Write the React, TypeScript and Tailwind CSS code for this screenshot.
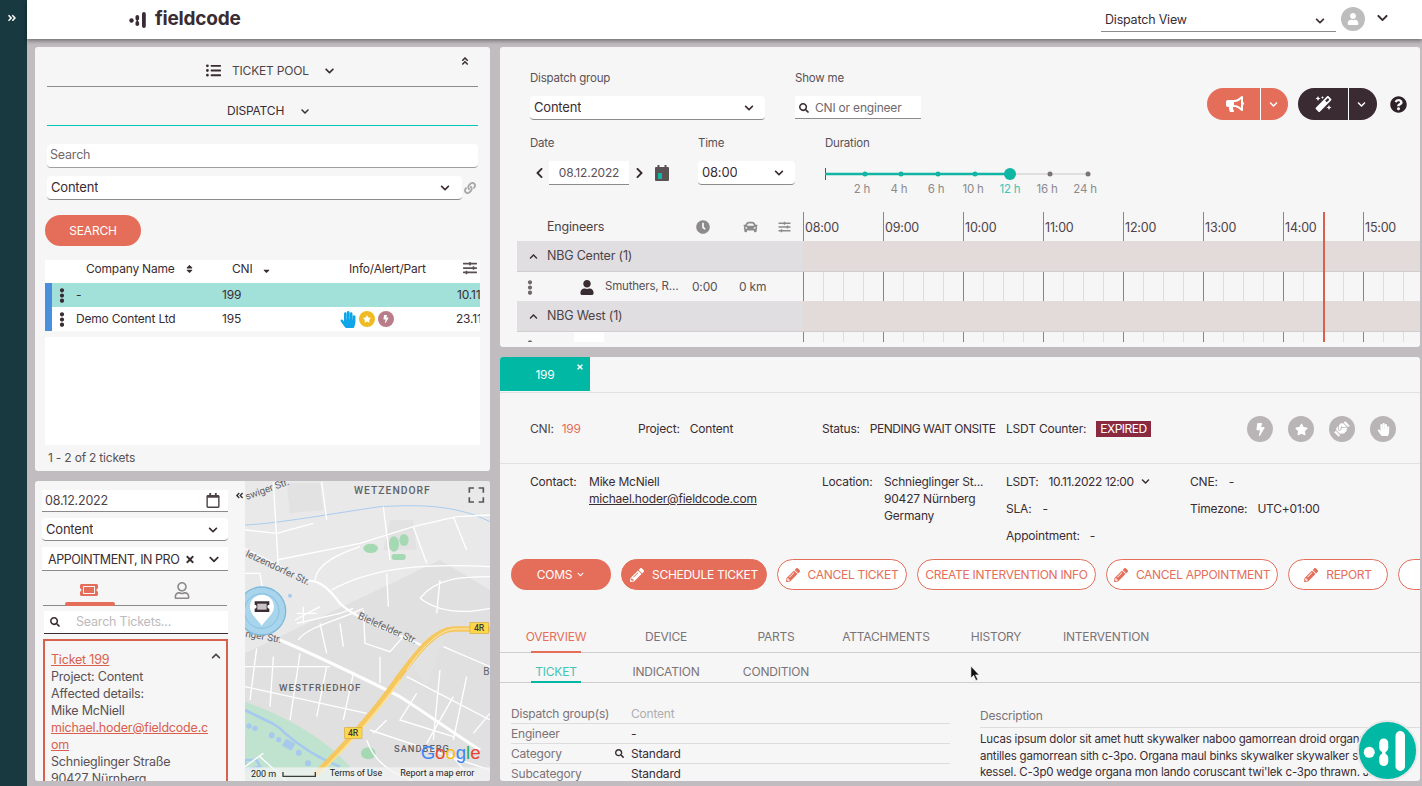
import React from "react";
import {
  FaAngleDoubleRight, FaAngleDoubleLeft, FaAngleDoubleUp, FaChevronDown, FaChevronUp, FaChevronLeft, FaChevronRight,
  FaSearch, FaLink, FaBolt, FaStar, FaHandPaper, FaHandshake, FaBullhorn, FaMagic, FaQuestionCircle, FaClock, FaCar,
  FaUser, FaPencilAlt, FaTimes, FaRegCalendar, FaSlidersH, FaEllipsisV, FaSort, FaSortDown, FaListUl, FaTicketAlt, FaRegUser,
} from "react-icons/fa";

const hours = ["08:00", "09:00", "10:00", "11:00", "12:00", "13:00", "14:00", "15:00"];
const quarters = Array.from({ length: 32 }, (_, i) => i);

const Logo = ({ className }: { className: string }) => (
  <svg viewBox="0 0 20 20" className={className} fill="currentColor">
    <circle cx="2.5" cy="10.5" r="2.2" />
    <rect x="6.5" y="5" width="3.6" height="5.5" rx="1.8" />
    <rect x="6.5" y="11" width="3.6" height="5" rx="1.8" />
    <rect x="7.6" y="9" width="1.4" height="3.5" />
    <rect x="13" y="2" width="3.8" height="16" rx="1.9" />
  </svg>
);

const Select = ({ label, className }: { label: string; className: string }) => (
  <div className={"flex items-center justify-between bg-white border-b border-[#8d8a8c] rounded-sm text-[13px] text-[#3a2c33] " + className}>
    <span className="truncate">{label}</span>
    <FaChevronDown className="w-[12px] h-[10px] shrink-0" />
  </div>
);

const Dots = ({ className }: { className?: string }) => <FaEllipsisV className={"w-[12px] h-[15px] shrink-0 text-[#3a2c33] " + (className ?? "")} />;

function TicketPool() {
  return (
    <div className="bg-[#f6f6f6] rounded-[3px] h-[424px] relative flex flex-col text-[#3a2c33] text-[12px]">
      <FaAngleDoubleUp className="absolute right-[20px] top-[9px] w-[10px] h-[10px]" />
      <div className="mx-[12px] h-[40px] shrink-0 border-b border-[#8d8a8c] flex items-center pl-[158px] pt-[8px]">
        <FaListUl className="w-[17px] h-[15px] mr-[10px]" />
        <span className="text-[#4d4347]">TICKET POOL</span>
        <FaChevronDown className="w-[13px] h-[10px] ml-[14px]" />
      </div>
      <div className="mx-[12px] h-[39px] shrink-0 border-b border-b-[#00c8b4] flex items-center pl-[180px] pt-[10px]">
        <span>DISPATCH</span>
        <FaChevronDown className="w-[12px] h-[9px] ml-[15px]" />
      </div>
      <div className="mx-[12px] mt-[18px] h-[24px] shrink-0 bg-white border-b border-[#a19ea0] rounded-sm px-[3px] flex items-center text-[#6f696c] text-[12.5px]">Search</div>
      <div className="mx-[12px] mt-[8px] flex items-center gap-[2px] shrink-0">
        <Select label="Content" className="w-[415px] h-[24px] px-[4px] pr-[11px]" />
        <FaLink className="w-[12px] h-[12px] text-[#a9a6a8]" />
      </div>
      <button className="ml-[10px] mt-[15px] w-[96px] h-[31px] shrink-0 rounded-full bg-[#e56e5a] text-white text-[12px]">SEARCH</button>
      <div className="mx-[10px] mt-[14px] flex-1 flex flex-col overflow-hidden">
        <div className="h-[23px] shrink-0 bg-white flex items-center relative pb-[5px]">
          <span className="ml-[41px] w-[117px] flex items-center">Company Name<FaSort className="w-[9px] h-[10px] ml-[10px]" /></span>
          <span className="ml-[29px] w-[90px] flex items-center">CNI<FaSortDown className="w-[9px] h-[10px] ml-[10px]" /></span>
          <span className="ml-[27px]">Info/Alert/Part</span>
          <FaSlidersH className="absolute right-[2px] top-[1px] w-[16px] h-[14px] text-[#5a5155]" />
        </div>
        <div className="h-[24px] shrink-0 bg-[#a2e1da] flex items-center border-l-[7px] border-[#4a8fdc] whitespace-nowrap">
          <Dots className="ml-[4px]" />
          <span className="ml-[8px] w-[146px] shrink-0">-</span>
          <span className="w-[235px] shrink-0">199</span>
          <span className="shrink-0">10.11</span>
        </div>
        <div className="h-[24px] shrink-0 bg-white flex items-center border-l-[7px] border-[#4a8fdc] whitespace-nowrap">
          <Dots className="ml-[4px]" />
          <span className="ml-[8px] w-[146px] shrink-0">Demo Content Ltd</span>
          <span className="w-[118px] shrink-0">195</span>
          <FaHandPaper className="w-[16px] h-[17px] shrink-0 text-[#0ea5e9]" />
          <span className="ml-[3px] w-[16px] h-[16px] shrink-0 rounded-full bg-[#eebb22] flex items-center justify-center"><FaStar className="w-[8px] h-[8px] text-white" /></span>
          <span className="ml-[3px] w-[16px] h-[16px] shrink-0 rounded-full bg-[#b87d88] flex items-center justify-center"><FaBolt className="w-[8px] h-[8px] text-white" /></span>
          <span className="ml-[62px] shrink-0">23.11</span>
        </div>
        <div className="h-[108px] shrink-0 mt-[6px] bg-white" />
      </div>
      <div className="ml-[13px] h-[26px] shrink-0 flex items-center text-[#5a5155] text-[12px]">1 - 2 of 2 tickets</div>
    </div>
  );
}

function MapView() {
  return (
    <svg viewBox="15 3 735 900" className="w-[245px] h-[300px] shrink-0" fontFamily="Roboto, sans-serif">
      <rect x="15" y="3" width="735" height="900" fill="#e9e9e9" />
      <path d="M15 520 L600 240 L750 330 V903 H15 Z" fill="#e0e0e0" />
      <path d="M140 10 H240 L250 90 L150 100 Z M450 120 H520 L530 210 H430 Z M500 520 L610 480 L560 620 Z" fill="#e2e2e2" />
      <path d="M15 665 C110 700 240 760 330 860 L300 903 H15 Z" fill="#bfe3cf" />
      <path d="M15 840 H50 L60 860 L15 870 Z M15 690 C70 720 110 730 135 760 C170 790 220 830 300 860" fill="none" stroke="#a8c9ee" strokeWidth="8" />
      <path d="M15 135 C120 130 280 100 420 80 C520 75 640 70 750 125" fill="none" stroke="#a9cdf0" strokeWidth="3" />
      <g fill="#a8c9ee">
        <circle cx="27" cy="738" r="8" /><circle cx="45" cy="745" r="8" /><circle cx="95" cy="766" r="9" /><circle cx="116" cy="779" r="8" />
        <rect x="130" y="782" width="32" height="24" transform="rotate(30 146 794)" /><circle cx="176" cy="818" r="9" /><circle cx="204" cy="850" r="9" />
        <circle cx="150" cy="347" r="6" />
      </g>
      <g fill="#a5d9b4">
        <ellipse cx="392" cy="205" rx="22" ry="14" /><ellipse cx="462" cy="192" rx="15" ry="23" /><ellipse cx="492" cy="180" rx="14" ry="18" /><rect x="455" y="222" width="42" height="18" rx="8" />
        <ellipse cx="385" cy="820" rx="22" ry="18" />
      </g>
      <g fill="none" stroke="#ffffff" strokeWidth="4">
        <path d="M100 5 L115 260 M15 150 L110 160 L220 130 M110 240 L360 190 L520 140 L650 110 L750 105 M245 5 L260 120 M430 80 L450 240 M520 140 L560 250 M640 110 L680 210" />
        <path d="M225 300 C230 250 300 220 360 200 M275 330 C400 260 560 250 750 260 M540 355 C590 290 680 290 750 290 M540 355 C600 400 680 400 750 385 M440 280 L445 380 M600 300 L590 400" />
        <path d="M15 205 L200 300 M15 280 H60 L80 400 M165 420 L240 380 M170 430 L300 400 L340 385 M175 480 C200 440 300 420 370 385 M370 390 L375 490 L450 515 L490 470 M240 430 L260 520 M300 430 L310 500 M170 400 H230 M190 380 V430" />
        <path d="M50 505 L30 660 M100 530 L90 680 M15 560 H270 M15 620 L380 700 M180 520 L150 720 M260 560 L230 710 M340 580 L310 720 M420 530 L420 610 M610 500 L750 560 M600 570 L580 780 M680 590 L640 780 M500 590 L750 720 M530 640 L480 720 L640 770 M640 650 L560 790" />
        <path d="M390 750 L750 870 M380 780 C400 840 450 880 520 903 M60 830 L140 903 M15 860 L70 820 M440 720 L400 760 M630 820 L700 903 M700 760 L750 700" />
      </g>
      <g fill="none" stroke="#ffffff" strokeWidth="9">
        <path d="M205 303 C240 300 270 330 300 370 C340 410 440 450 555 500" strokeWidth="7" />
        <path d="M120 480 C260 540 400 610 480 650 C560 700 640 760 720 810" />
      </g>
      <g fill="none" strokeLinecap="round">
        <path d="M230 880 C300 810 400 700 470 600 C530 520 580 450 640 447 H750" stroke="#f5c75e" strokeWidth="17" />
        <path d="M500 570 C540 510 590 455 640 447 H720" stroke="#fdf0c5" strokeWidth="2.5" />
        <path d="M240 880 C310 810 410 700 480 600" stroke="#ffe08a" strokeWidth="5" />
      </g>
      <g fontSize="31" fontWeight="500" fill="#5f6368" letterSpacing="3">
        <text x="342" y="42">WETZENDORF</text>
        <text x="117" y="633" fontSize="29">WESTFRIEDHOF</text>
        <text x="462" y="816" fontSize="28">SANDBERG</text>
      </g>
      <g fontSize="30" fill="#5f6368">
        <text x="20" y="60" transform="rotate(-20 20 60)">swiger Str.</text>
        <text x="15" y="228" transform="rotate(25 15 228)">letzendorfer Str.</text>
        <text x="352" y="415" transform="rotate(24 352 415)">Bielefelder Str.</text>
        <text x="15" y="470" transform="rotate(10 15 470)">nger Str.</text>
        <text x="730" y="586">B</text>
      </g>
      <g fontSize="26" fontWeight="500" fill="#3c3c3c">
        <rect x="690" y="428" width="56" height="32" fill="#fbd84a" stroke="#d7a93a" strokeWidth="2" />
        <text x="702" y="453">4R</text>
        <rect x="314" y="743" width="52" height="32" fill="#fbd84a" stroke="#d7a93a" strokeWidth="2" />
        <text x="324" y="768">4R</text>
      </g>
      <circle cx="65" cy="393" r="72" fill="#a8d5ec" stroke="#7fb8dc" strokeWidth="4" />
      <circle cx="65" cy="393" r="52" fill="none" stroke="#86bfe0" strokeWidth="3" />
      <path d="M65 437 C50 415 30 402 30 380 A36 36 0 0 1 102 380 C102 402 80 415 65 437 Z" fill="#ffffff" />
      <path d="M44 364 H88 V374 A6 6 0 0 0 88 386 V396 H44 V386 A6 6 0 0 0 44 374 Z" fill="#3a2c33" />
      <rect x="52" y="371" width="28" height="18" fill="#c8c4c6" />
      <path d="M688 38 V24 H702 M716 24 H730 V38 M688 52 V66 H702 M716 66 H730 V52" fill="none" stroke="#5a5658" strokeWidth="5" />
      <rect x="15" y="862" width="735" height="41" fill="#f4f4f4" opacity="0.75" />
      <g fontSize="27" fill="#222222">
        <text x="33" y="892">200 m</text>
        <text x="269" y="889">Terms of Use</text>
        <text x="481" y="889">Report a map error</text>
      </g>
      <path d="M129 876 V889 H226 V876" fill="none" stroke="#3c3c3c" strokeWidth="4" />
      <text x="542" y="836" fontSize="56" fontWeight="500" fontFamily="Liberation Sans, sans-serif">
        <tspan fill="#4285f4">G</tspan><tspan fill="#ea4335">o</tspan><tspan fill="#fbbc05">o</tspan><tspan fill="#4285f4">g</tspan><tspan fill="#34a853">l</tspan><tspan fill="#ea4335">e</tspan>
      </text>
    </svg>
  );
}

function TicketMap() {
  return (
    <div className="bg-[#f6f6f6] rounded-[3px] h-[300px] overflow-hidden flex text-[#3a2c33] relative">
      <div className="w-[200px] shrink-0 pl-[7px] pr-[7px] pt-[9px] flex flex-col">
        <div className="h-[22px] shrink-0 bg-white border-b border-[#8d8a8c] flex items-center justify-between pl-[3px] pr-[8px] pt-[2px] text-[12.5px] text-[#4d4347]">
          08.12.2022<FaRegCalendar className="w-[14px] h-[15px] -mt-[2px]" />
        </div>
        <Select label="Content" className="mt-[6px] h-[23px] shrink-0 px-[4px] pr-[9px] pt-[2px]" />
        <div className="mt-[6px] h-[24px] shrink-0 bg-white border-b border-[#8d8a8c] flex items-center pl-[6px] pr-[7px] pt-[3px] text-[12.5px] tracking-[-0.45px]">
          <span className="w-[132px] shrink-0 overflow-hidden whitespace-nowrap">APPOINTMENT, IN PROGRESS</span>
          <FaTimes className="w-[10px] h-[11px] ml-[5px] shrink-0 -mt-[2px]" />
          <FaChevronDown className="w-[14px] h-[11px] ml-[12px] shrink-0 -mt-[2px]" />
        </div>
        <div className="mt-[9px] h-[26px] pt-[2px] shrink-0 mx-px border-b border-[#8d8a8c] flex">
          <div className="w-[91px] flex flex-col items-center relative">
            <FaTicketAlt className="w-[20px] h-[16px] text-[#e56e5a]" />
            <div className="absolute bottom-[-1px] left-[22px] w-[50px] h-[4px] rounded-sm bg-[#e56e5a]" />
          </div>
          <div className="flex-1 flex justify-center"><FaRegUser className="w-[16px] h-[17px] text-[#8d8a8c] ml-[2px]" /></div>
        </div>
        <div className="mt-[5px] ml-[2px] h-[23px] shrink-0 bg-white border-b border-[#3a2c33] flex items-center pl-[6px] text-[12.5px] text-[#bdbabc]">
          <FaSearch className="w-[10px] h-[10px] text-[#3a2c33] mr-[16px]" />Search Tickets...
        </div>
        <div className="mt-[5px] h-[200px] shrink-0 ml-px border-2 border-[#d9604f] pl-[6px] pr-[18px] pt-[10px] text-[12.5px] leading-[17px] text-[#5a5155] relative break-all">
          <FaChevronUp className="absolute right-[4px] top-[10px] w-[12px] h-[10px] text-[#4d4347]" />
          <div className="text-[#d9604f] underline">Ticket 199</div>
          <div>Project: Content</div>
          <div>Affected details:</div>
          <div>Mike McNiell</div>
          <div className="text-[#d9604f] underline">michael.hoder@fieldcode.com</div>
          <div>Schnieglinger Straße</div>
          <div>90427 Nürnberg</div>
        </div>
      </div>
      <div className="w-[10px] shrink-0 relative">
        <FaAngleDoubleLeft className="absolute right-[1px] top-[10px] w-[9px] h-[9px]" />
      </div>
      <MapView />
    </div>
  );
}

function Slider() {
  const dots = [40, 76, 113, 150, 225, 263];
  const labels = [["2 h", 37], ["4 h", 74], ["6 h", 111], ["10 h", 148], ["12 h", 185], ["16 h", 222], ["24 h", 260]] as const;
  return (
    <svg viewBox="0 0 290 36" className="w-[290px] h-[36px]">
      <line x1="0.5" y1="8" x2="0.5" y2="20" stroke="#5a5155" />
      <line x1="0" y1="14" x2="263" y2="14" stroke="#d9d7d8" strokeWidth="1.5" />
      <line x1="0" y1="14" x2="185" y2="14" stroke="#10b5a4" strokeWidth="2.5" />
      {dots.map((x) => <circle key={x} cx={x} cy="14" r="2.5" fill={x < 185 ? "#10b5a4" : "#7b7376"} />)}
      <circle cx="185" cy="14" r="6" fill="#10b5a4" />
      {labels.map(([t, x]) => (
        <text key={t} x={x} y="33" textAnchor="middle" fontSize="11.5" fontFamily="Inter, sans-serif" fill={t === "12 h" ? "#3fc4b6" : "#8d8a8c"}>{t}</text>
      ))}
    </svg>
  );
}

const GroupRow = ({ label }: { label: string }) => (
  <div className="h-[31px] shrink-0 flex border-b border-[#cfcdce] bg-[#e0dee0]">
    <div className="w-[286px] shrink-0 flex items-center pt-[1px] text-[12.5px] text-[#4d4347]">
      <FaChevronUp className="w-[11px] h-[9px] ml-[11px] mr-[8px] text-[#3a2c33]" />{label}
    </div>
    <div className="flex-1 bg-[#e3dbd9]" />
  </div>
);

const Quarters = () => (
  <div className="flex h-full">
    {quarters.map((q) => (
      <div key={q} className={q % 4 === 0 ? "w-[20px] shrink-0 border-l border-[#8a8487]" : "w-[20px] shrink-0 border-l border-[#dedcdd]"} />
    ))}
  </div>
);

function Dispatch() {
  return (
    <div className="bg-[#f6f6f6] rounded-[3px] h-[300px] overflow-hidden text-[#3a2c33] text-[12px] relative flex flex-col">
      <div className="h-[165px] shrink-0 pl-[30px] pt-[24px] relative">
        <div className="flex">
          <div className="w-[235px]">
            <div className="text-[11.5px] text-[#5a5155] h-[14px] leading-[14px]">Dispatch group</div>
            <Select label="Content" className="mt-[11px] h-[24px] px-[4px] pr-[10px] pt-[1px]" />
          </div>
          <div className="w-[126px] ml-[30px]">
            <div className="text-[11.5px] text-[#5a5155] h-[14px] leading-[14px]">Show me</div>
            <div className="mt-[11px] h-[23px] bg-white border-b border-[#8d8a8c] flex items-center px-[4px] pt-[1px] text-[#6f696c]">
              <FaSearch className="w-[10px] h-[10px] mr-[6px] text-[#3a2c33]" />CNI or engineer
            </div>
          </div>
        </div>
        <div className="flex mt-[16px]">
          <div className="w-[168px]">
            <div className="text-[11.5px] text-[#5a5155] h-[14px] leading-[14px]">Date</div>
            <div className="mt-[11px] flex items-center h-[24px]">
              <FaChevronLeft className="w-[11px] h-[12px] ml-[4px]" />
              <div className="ml-[4px] w-[80px] h-[24px] bg-white border-b border-[#8d8a8c] flex items-center justify-center pt-[1px] text-[12px] text-[#5a5155]">08.12.2022</div>
              <FaChevronRight className="w-[11px] h-[12px] ml-[5px]" />
              <svg viewBox="0 0 14 16" className="w-[14px] h-[16px] ml-[10px]">
                <rect x="0" y="2" width="14" height="14" rx="1" fill="#5a5155" />
                <rect x="2.5" y="0" width="2" height="4" fill="#5a5155" />
                <rect x="9.5" y="0" width="2" height="4" fill="#5a5155" />
                <rect x="3" y="8" width="4" height="6" fill="#10b5a4" />
              </svg>
            </div>
          </div>
          <div className="w-[97px]">
            <div className="text-[11.5px] text-[#5a5155] h-[14px] leading-[14px]">Time</div>
            <Select label="08:00" className="mt-[11px] h-[24px] px-[4px] pr-[10px] pt-[1px] text-[12.5px]" />
          </div>
          <div className="ml-[30px]">
            <div className="text-[11.5px] text-[#5a5155] h-[14px] leading-[14px]">Duration</div>
            <div className="mt-[10px]"><Slider /></div>
          </div>
        </div>
        <div className="absolute right-[13px] top-[41px] flex items-center">
          <div className="w-[81px] h-[32px] rounded-full bg-[#e56e5a] flex items-center text-white">
            <div className="w-[54px] h-full border-r border-white flex items-center justify-center pl-[3px]"><FaBullhorn className="w-[18px] h-[16px]" /></div>
            <FaChevronDown className="w-[11px] h-[9px] ml-[7px]" />
          </div>
          <div className="w-[79px] h-[32px] ml-[10px] rounded-full bg-[#3a2a31] flex items-center text-white">
            <div className="w-[51px] h-full border-r border-white flex items-center justify-center"><FaMagic className="w-[17px] h-[16px]" /></div>
            <FaChevronDown className="w-[11px] h-[9px] ml-[7px]" />
          </div>
          <FaQuestionCircle className="w-[17px] h-[17px] ml-[13px] text-[#2c2228]" />
        </div>
      </div>
      <div className="ml-[17px] h-[130px] relative overflow-hidden flex flex-col">
        <div className="h-[29px] shrink-0 flex">
          <div className="w-[286px] shrink-0 flex items-center text-[12.5px] text-[#4d4347] pt-[1px]">
            <span className="ml-[30px] w-[149px]">Engineers</span>
            <FaClock className="w-[14px] h-[14px] text-[#8d8a8c]" />
            <FaCar className="w-[15px] h-[14px] ml-[33px] text-[#8d8a8c]" />
            <FaSlidersH className="w-[13px] h-[12px] ml-[20px] text-[#8d8a8c]" />
          </div>
          <div className="flex">
            {hours.map((h) => <div key={h} className="w-[80px] shrink-0 border-l border-[#8a8487] pl-[1px] pt-[7px] text-[12.5px] text-[#4d4347]">{h}</div>)}
          </div>
        </div>
        <GroupRow label="NBG Center (1)" />
        <div className="h-[29px] shrink-0 flex items-center">
          <div className="w-[286px] shrink-0 flex items-center text-[12px] text-[#5a5155] pt-[1px]">
            <FaEllipsisV className="w-[12px] h-[15px] ml-[7px] text-[#6f696c]" />
            <FaUser className="w-[14px] h-[15px] ml-[44px] text-[#3a2c33]" />
            <span className="ml-[11px] w-[76px] mr-[11px] truncate text-[11.5px]">Smuthers, Rick</span>
            <span className="w-[47px]">0:00</span>
            <span>0 km</span>
          </div>
          <Quarters />
        </div>
        <GroupRow label="NBG West (1)" />
        <div className="h-[11px] shrink-0 flex">
          <div className="w-[286px] shrink-0 flex">
            <FaEllipsisV className="w-[12px] h-[15px] ml-[7px] mt-[8px] text-[#6f696c]" />
            <div className="ml-[38px] w-[30px] h-[11px] bg-white" />
          </div>
          <Quarters />
        </div>
        <div className="absolute left-[806px] top-0 bottom-0 w-[1.5px] bg-[#d9604f]" />
      </div>
    </div>
  );
}

const ActionButton = ({ label, width, pencil, solid }: { label: string; width: string; pencil?: boolean; solid?: boolean }) => (
  <button className={"h-[31px] shrink-0 rounded-full flex items-center justify-center gap-[8px] text-[12px] tracking-[-0.3px] border border-[#e56e5a] whitespace-nowrap " + width + (solid ? " bg-[#e56e5a] text-white" : " bg-white text-[#e56e5a]")}>
    {pencil && <FaPencilAlt className="w-[14px] h-[14px]" />}
    {label}
  </button>
);

const FieldRow = ({ label, value, muted, search }: { label: string; value: string; muted?: boolean; search?: boolean }) => (
  <div className="h-[20px] flex items-center border-b border-[#dedcdd] text-[12px]">
    <span className="w-[104px] shrink-0 text-[#7b7376]">{label}</span>
    <span className="w-[16px] shrink-0">{search && <FaSearch className="w-[9px] h-[9px]" />}</span>
    <span className={muted ? "text-[#b0adaf]" : "text-[#3a2c33]"}>{value}</span>
  </div>
);

function TicketDetail() {
  return (
    <div className="bg-[#f6f6f6] rounded-[3px] h-[424px] overflow-hidden text-[#3a2c33] text-[12px] relative flex flex-col">
      <div className="h-[36px] shrink-0 border-b border-[#e3e1e2]">
        <div className="w-[90px] h-[34px] bg-[#00b8a4] text-white flex items-center justify-center relative pt-[1px]">
          199
          <FaTimes className="absolute right-[6px] top-[6px] w-[8px] h-[8px]" />
        </div>
      </div>
      <div className="h-[71px] shrink-0 border-b border-[#e3e1e2] pl-[30px] pt-[1px] flex items-center relative">
        <span className="w-[108px]"><span className="text-[#4d4347]">CNI:</span><span className="ml-[8px] text-[#e56e5a]">199</span></span>
        <span className="w-[184px]">Project:<span className="ml-[10px]">Content</span></span>
        <span className="w-[184px] whitespace-nowrap">Status:<span className="ml-[10px] tracking-[-0.5px]">PENDING WAIT ONSITE</span></span>
        <span>LSDT Counter:</span>
        <span className="ml-[10px] px-[4px] h-[16px] bg-[#8a2a40] text-white flex items-center tracking-[-0.5px]">EXPIRED</span>
        <div className="absolute left-[747px] top-[23px] flex gap-[15px]">
          {[FaBolt, FaStar, FaHandshake, FaHandPaper].map((Icon, i) => (
            <span key={i} className="w-[26px] h-[26px] rounded-full bg-[#b9b5b7] flex items-center justify-center text-white">
              <Icon className={i === 2 ? "w-[16px] h-[16px] -rotate-45" : "w-[13px] h-[13px]"} />
            </span>
          ))}
        </div>
      </div>
      <div className="h-[95px] shrink-0 pl-[30px] pt-[9px] flex leading-[17px]">
        <div className="w-[292px] flex">
          <span className="w-[59px]">Contact:</span>
          <div><div>Mike McNiell</div><div className="underline">michael.hoder@fieldcode.com</div></div>
        </div>
        <div className="w-[184px] flex">
          <span className="w-[62px]">Location:</span>
          <div><div>Schnieglinger St...</div><div>90427 Nürnberg</div><div>Germany</div></div>
        </div>
        <div className="w-[184px]">
          <div className="flex items-center">LSDT:<span className="ml-[10px] tracking-[-0.4px]">10.11.2022 12:00</span><FaChevronDown className="w-[11px] h-[9px] ml-[6px]" /></div>
          <div className="mt-[10px]">SLA:<span className="ml-[11px]">-</span></div>
          <div className="mt-[10px]">Appointment:<span className="ml-[10px]">-</span></div>
        </div>
        <div>
          <div>CNE:<span className="ml-[11px]">-</span></div>
          <div className="mt-[10px]">Timezone:<span className="ml-[10px]">UTC+01:00</span></div>
        </div>
      </div>
      <div className="flex gap-[10px] pl-[11px] shrink-0">
        <button className="w-[100px] h-[31px] shrink-0 rounded-full bg-[#e56e5a] text-white flex items-center justify-center gap-[4px]">COMS<FaChevronDown className="w-[9px] h-[7px]" /></button>
        <ActionButton label="SCHEDULE TICKET" width="w-[146px]" pencil solid />
        <ActionButton label="CANCEL TICKET" width="w-[130px]" pencil />
        <ActionButton label="CREATE INTERVENTION INFO" width="w-[179px]" />
        <ActionButton label="CANCEL APPOINTMENT" width="w-[172px]" pencil />
        <ActionButton label="REPORT" width="w-[100px]" pencil />
        <ActionButton label="" width="w-[100px]" />
      </div>
      <div className="mt-[30px] h-[33px] shrink-0 border-b border-[#cfcdce] flex text-[#7b7376]">
        {["OVERVIEW", "DEVICE", "PARTS", "ATTACHMENTS", "HISTORY", "INTERVENTION"].map((t, i) => (
          <div key={t} className="w-[110px] ml-px -mr-px text-center pt-[8px] relative">
            <span className={i === 0 ? "text-[#e56e5a]" : ""}>{t}</span>
            {i === 0 && <div className="absolute left-[30px] bottom-[-1px] w-[50px] h-[2px] bg-[#e56e5a]" />}
          </div>
        ))}
      </div>
      <div className="h-[30px] shrink-0 border-b border-[#cfcdce] flex text-[#7b7376]">
        {["TICKET", "INDICATION", "CONDITION"].map((t, i) => (
          <div key={t} className="w-[110px] ml-px -mr-px text-center pt-[10px] relative">
            <span className={i === 0 ? "text-[#3fc4b6]" : ""}>{t}</span>
            {i === 0 && <div className="absolute left-[30px] bottom-[-1px] w-[50px] h-[2px] bg-[#00b8a4]" />}
          </div>
        ))}
      </div>
      <div className="flex pl-[11px] pt-[21px]">
        <div className="w-[439px] shrink-0">
          <FieldRow label="Dispatch group(s)" value="Content" muted />
          <FieldRow label="Engineer" value="-" />
          <FieldRow label="Category" value="Standard" search />
          <FieldRow label="Subcategory" value="Standard" />
        </div>
        <div className="ml-[30px] w-[440px] shrink-0">
          <div className="h-[24px] border-b border-[#dedcdd] text-[#7b7376] pt-[3px]">Description</div>
          <div className="pt-[3px] leading-[16.5px] text-[11.5px] whitespace-nowrap">
            <div>Lucas ipsum dolor sit amet hutt skywalker naboo gamorrean droid organa</div>
            <div>antilles gamorrean sith c-3po. Organa maul binks skywalker skywalker solo</div>
            <div>kessel. C-3p0 wedge organa mon lando coruscant twi'lek c-3po thrawn. Jar</div>
          </div>
        </div>
      </div>
      <svg viewBox="0 0 12 18" className="absolute left-[470px] top-[308px] w-[11px] h-[17px]">
        <path d="M1 1 V14 L4 11 L6.5 16.5 L8.5 15.5 L6 10.5 H10 Z" fill="#111111" stroke="#ffffff" strokeWidth="0.6" />
      </svg>
      <div className="absolute right-[2px] bottom-0 w-[61px] h-[61px] rounded-full bg-[#00b8a4] border-2 border-[#e8e8e8] flex items-center justify-center text-white">
        <Logo className="w-[50px] h-[50px]" />
      </div>
    </div>
  );
}

export default function App() {
  return (
    <div className="flex w-[1422px] h-[786px] overflow-hidden bg-[#c0bcbf] tracking-[-0.2px] font-['Inter','Noto_Sans',sans-serif]">
      <div className="w-[27px] shrink-0 bg-[#17393f] pt-[13px] flex justify-center">
        <FaAngleDoubleRight className="w-[10px] h-[10px] text-white -ml-[3px]" />
      </div>
      <div className="flex-1 flex flex-col">
        <div className="h-[39px] shrink-0 bg-white shadow-[0_2px_4px_rgba(0,0,0,0.4)] flex items-center relative z-10 text-[#3a2c33]">
          <Logo className="w-[20px] h-[20px] ml-[102px]" />
          <span className="ml-[6px] text-[19px] font-bold tracking-[-0.2px]">fieldcode</span>
          <div className="ml-auto mr-[5px] w-[235px] h-[24px] border-b border-[#8d8a8c] flex items-center justify-between pl-[4px] pr-[10px] pt-[2px] mt-[1px] text-[12.5px]">
            Dispatch View<FaChevronDown className="w-[12px] h-[10px]" />
          </div>
          <span className="w-[24px] h-[24px] -mt-[1px] rounded-full bg-[#bdbdbd] flex items-center justify-center text-white"><FaUser className="w-[12px] h-[12px]" /></span>
          <FaChevronDown className="w-[15px] h-[12px] ml-[10px] mr-[32px] -mt-[3px]" />
        </div>
        <div className="flex gap-[10px] pl-[8px] pt-[8px]">
          <div className="w-[455px] shrink-0 flex flex-col gap-[10px]">
            <TicketPool />
            <TicketMap />
          </div>
          <div className="w-[920px] shrink-0 flex flex-col gap-[10px]">
            <Dispatch />
            <TicketDetail />
          </div>
        </div>
      </div>
    </div>
  );
}
